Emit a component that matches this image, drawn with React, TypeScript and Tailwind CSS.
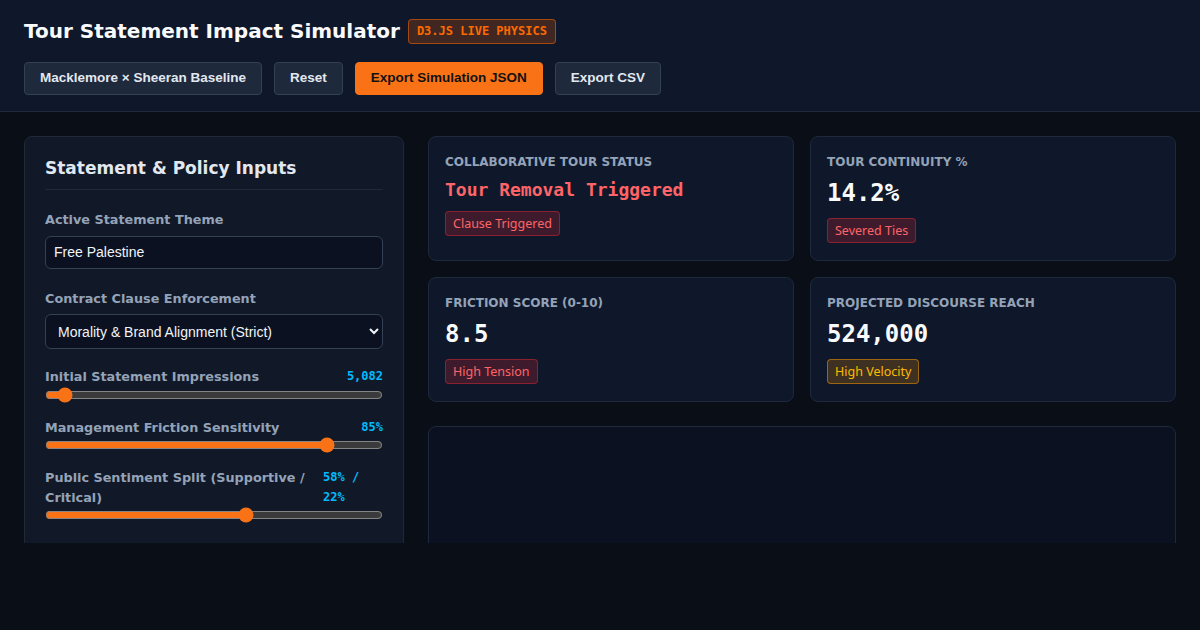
import React from "react";

const sans = "font-['Noto_Sans',sans-serif]";
const dv = "font-['DejaVu_Sans',sans-serif]";
const mono = "font-['DejaVu_Sans_Mono',monospace]";
const arial = "font-['Liberation_Sans',Arial,sans-serif]";

function Badge({ tone, children }: { tone: "red" | "amber"; children: React.ReactNode }) {
  const cls =
    tone === "red"
      ? "bg-red-500/20 border-red-500/40 text-red-400"
      : "bg-amber-500/20 border-amber-500/50 text-amber-400";
  return (
    <span className={`inline-block mt-[10px] rounded border px-[7px] py-[2px] text-[12.5px] leading-[19px] ${sans} ${cls}`}>
      {children}
    </span>
  );
}

function Card({
  label,
  value,
  valueClass,
  badge,
  tone,
}: {
  label: string;
  value: string;
  valueClass: string;
  badge: string;
  tone: "red" | "amber";
}) {
  return (
    <div className="min-h-[125px] rounded-lg border border-[#1e293b] bg-[#0f172a] p-4">
      <div className={`text-[12px] font-bold uppercase leading-[18px] text-[#94a3b8] ${dv}`}>{label}</div>
      <div className={`mt-2 font-bold leading-[1.2] ${mono} ${valueClass}`}>{value}</div>
      <Badge tone={tone}>{badge}</Badge>
    </div>
  );
}

function Slider({
  label,
  value,
  min,
  max,
  val,
  wrapValue,
}: {
  label: string;
  value: string;
  min: number;
  max: number;
  val: number;
  wrapValue?: boolean;
}) {
  return (
    <div className="mb-[15px]">
      <div className="flex justify-between gap-4">
        <span className={`text-[12.8px] font-bold leading-[19.5px] text-[#94a3b8] ${dv}`}>{label}</span>
        <span
          className={`text-[12px] font-bold leading-[19.5px] text-sky-400 ${mono} ${wrapValue ? "w-[60px] shrink-0" : "shrink-0"}`}
        >
          {value}
        </span>
      </div>
      <input
        type="range"
        min={min}
        max={max}
        defaultValue={val}
        className="m-0 block h-4 w-full accent-[#f97316] [color-scheme:dark]"
      />
    </div>
  );
}

export default function App() {
  return (
    <div className="h-[630px] overflow-hidden bg-[#0a0e16] text-white">
      <header className="border-b border-[#1e293b] bg-[#0f172a] px-6 py-4">
        <div className="flex h-[30px] items-center gap-2">
          <h1 className={`text-[20px] font-bold leading-7 text-[#f8fafc] ${dv}`}>Tour Statement Impact Simulator</h1>
          <span
            className={`flex h-[25px] items-center rounded border border-orange-500/50 bg-orange-500/20 px-2 text-[12px] font-bold text-orange-500 ${mono}`}
          >
            D3.JS LIVE PHYSICS
          </span>
        </div>
        <div className={`mt-4 flex gap-3 text-[13.5px] font-bold ${arial}`}>
          <button className="h-[33px] rounded border border-[#334155] bg-[#1e293b] px-[15px] text-[#e2e8f0]">
            Macklemore × Sheeran Baseline
          </button>
          <button className="h-[33px] rounded border border-[#334155] bg-[#1e293b] px-[15px] text-[#e2e8f0]">Reset</button>
          <button className="h-[33px] rounded border border-[#f97316] bg-[#f97316] px-[15px] text-[#111111]">
            Export Simulation JSON
          </button>
          <button className="h-[33px] rounded border border-[#334155] bg-[#1e293b] px-[15px] text-[#e2e8f0]">
            Export CSV
          </button>
        </div>
      </header>

      <main className="grid h-[431px] grid-cols-[380px_1fr] items-start gap-6 overflow-hidden p-6">
        <section className="rounded-lg border border-[#1f2937] bg-[#111827] p-5 pb-8">
          <h2 className={`border-b border-[#1f2937] pb-[10px] text-[17px] font-bold leading-[22px] text-[#e2e8f0] ${dv}`}>
            Statement &amp; Policy Inputs
          </h2>

          <div className="mt-5">
            <label className={`block text-[12.8px] font-bold leading-[19.5px] text-[#94a3b8] ${dv}`}>
              Active Statement Theme
            </label>
            <input
              defaultValue="Free Palestine"
              className={`mt-[6px] block h-[33px] w-full rounded-md border border-[#334155] bg-[#0b1120] px-2 text-[14px] text-[#f1f5f9] outline-none ${arial}`}
            />
          </div>

          <div className="mt-5">
            <label className={`block text-[12.8px] font-bold leading-[19.5px] text-[#94a3b8] ${dv}`}>
              Contract Clause Enforcement
            </label>
            <select
              defaultValue="strict"
              className={`mt-[6px] block h-[35px] w-full rounded-md border border-[#334155] bg-[#0b1120] px-[8px] text-[14px] text-[#f1f5f9] outline-none [color-scheme:dark] ${arial}`}
            >
              <option value="strict">Morality &amp; Brand Alignment (Strict)</option>
              <option value="standard">Standard Conduct</option>
            </select>
          </div>

          <div className="mt-[18px]">
            <Slider label="Initial Statement Impressions" value="5,082" min={1000} max={110000} val={5082} />
            <Slider label="Management Friction Sensitivity" value="85%" min={0} max={100} val={85} />
            <Slider label="Public Sentiment Split (Supportive / Critical)" value="58% / 22%" min={0} max={100} val={60} wrapValue />
          </div>
        </section>

        <div className="flex flex-col">
          <div className="grid grid-cols-2 gap-4">
            <Card
              label="Collaborative Tour Status"
              value="Tour Removal Triggered"
              valueClass="text-[18px] text-red-400"
              badge="Clause Triggered"
              tone="red"
            />
            <Card label="Tour Continuity %" value="14.2%" valueClass="text-[24px] text-[#f8fafc]" badge="Severed Ties" tone="red" />
            <Card label="Friction Score (0-10)" value="8.5" valueClass="text-[24px] text-[#f8fafc]" badge="High Tension" tone="red" />
            <Card
              label="Projected Discourse Reach"
              value="524,000"
              valueClass="text-[24px] text-[#f8fafc]"
              badge="High Velocity"
              tone="amber"
            />
          </div>
          <div className="mt-6 h-[400px] rounded-lg border border-[#1e293b] bg-[#0b1120]" />
        </div>
      </main>
    </div>
  );
}
